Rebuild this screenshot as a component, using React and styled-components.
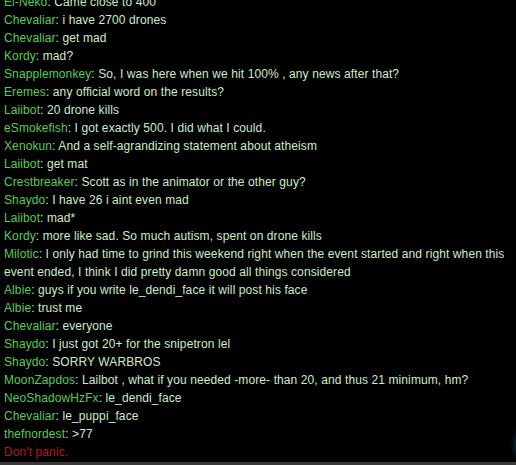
import React from "react";
import styled, { createGlobalStyle } from "styled-components";

const GlobalStyle = createGlobalStyle`
  html, body {
    margin: 0;
    padding: 0;
    background: #000;
  }
`;

const messages = [
  { name: "El-Neko", text: "Came close to 400" },
  { name: "Chevaliar", text: "i have 2700 drones" },
  { name: "Chevaliar", text: "get mad" },
  { name: "Kordy", text: "mad?" },
  { name: "Snapplemonkey", text: "So, I was here when we hit 100% , any news after that?" },
  { name: "Eremes", text: "any official word on the results?" },
  { name: "Laiibot", text: "20 drone kills" },
  { name: "eSmokefish", text: "I got exactly 500. I did what I could." },
  { name: "Xenokun", text: "And a self-agrandizing statement about atheism" },
  { name: "Laiibot", text: "get mat" },
  { name: "Crestbreaker", text: "Scott as in the animator or the other guy?" },
  { name: "Shaydo", text: "I have 26 i aint even mad" },
  { name: "Laiibot", text: "mad*" },
  { name: "Kordy", text: "more like sad. So much autism, spent on drone kills" },
  {
    name: "Milotic",
    text: "I only had time to grind this weekend right when the event started and right when this event ended, I think I did pretty damn good all things considered",
  },
  { name: "Albie", text: "guys if you write le_dendi_face it will post his face" },
  { name: "Albie", text: "trust me" },
  { name: "Chevaliar", text: "everyone" },
  { name: "Shaydo", text: "I just got 20+ for the snipetron lel" },
  { name: "Shaydo", text: "SORRY WARBROS" },
  { name: "MoonZapdos", text: "Lailbot , what if you needed -more- than 20, and thus 21 minimum, hm?" },
  { name: "NeoShadowHzFx", text: "le_dendi_face" },
  { name: "Chevaliar", text: "le_puppi_face" },
  { name: "thefnordest", text: ">77" },
];

const App = () => {
  return (
    <>
      <GlobalStyle />
      <Window>
        <Log>
          {messages.map((m, i) => (
            <Line key={i}>
              <Name>{m.name}</Name>: {m.text}
            </Line>
          ))}
          <Line $system>Don't panic.</Line>
        </Log>
        <Glow />
        <BottomBar />
      </Window>
    </>
  );
};

const Window = styled.div`
  position: relative;
  width: 516px;
  height: 465px;
  background: #000;
  display: flex;
  flex-direction: column;
  overflow: hidden;
`;

const Log = styled.div`
  flex: 1;
  display: flex;
  flex-direction: column;
  justify-content: flex-end;
  overflow: hidden;
  padding: 0 2px 1px 4px;
  font-family: "Liberation Sans", Arial, sans-serif;
  font-size: 12px;
  letter-spacing: 0.1px;
  line-height: 18px;
  -webkit-font-smoothing: none;
`;

const Line = styled.div`
  color: ${(p) => (p.$system ? "#b31a1a" : "#cdeccd")};
`;

const Name = styled.span`
  color: #58cc58;
`;

const Glow = styled.div`
  position: absolute;
  right: -14px;
  bottom: 0;
  width: 20px;
  height: 40px;
  border-radius: 50%;
  background: radial-gradient(ellipse at center, rgba(30, 70, 90, 0.7), rgba(0, 0, 0, 0) 70%);
`;

const BottomBar = styled.div`
  height: 3px;
  flex-shrink: 0;
  background: #3a3a3a;
`;

export default App;
